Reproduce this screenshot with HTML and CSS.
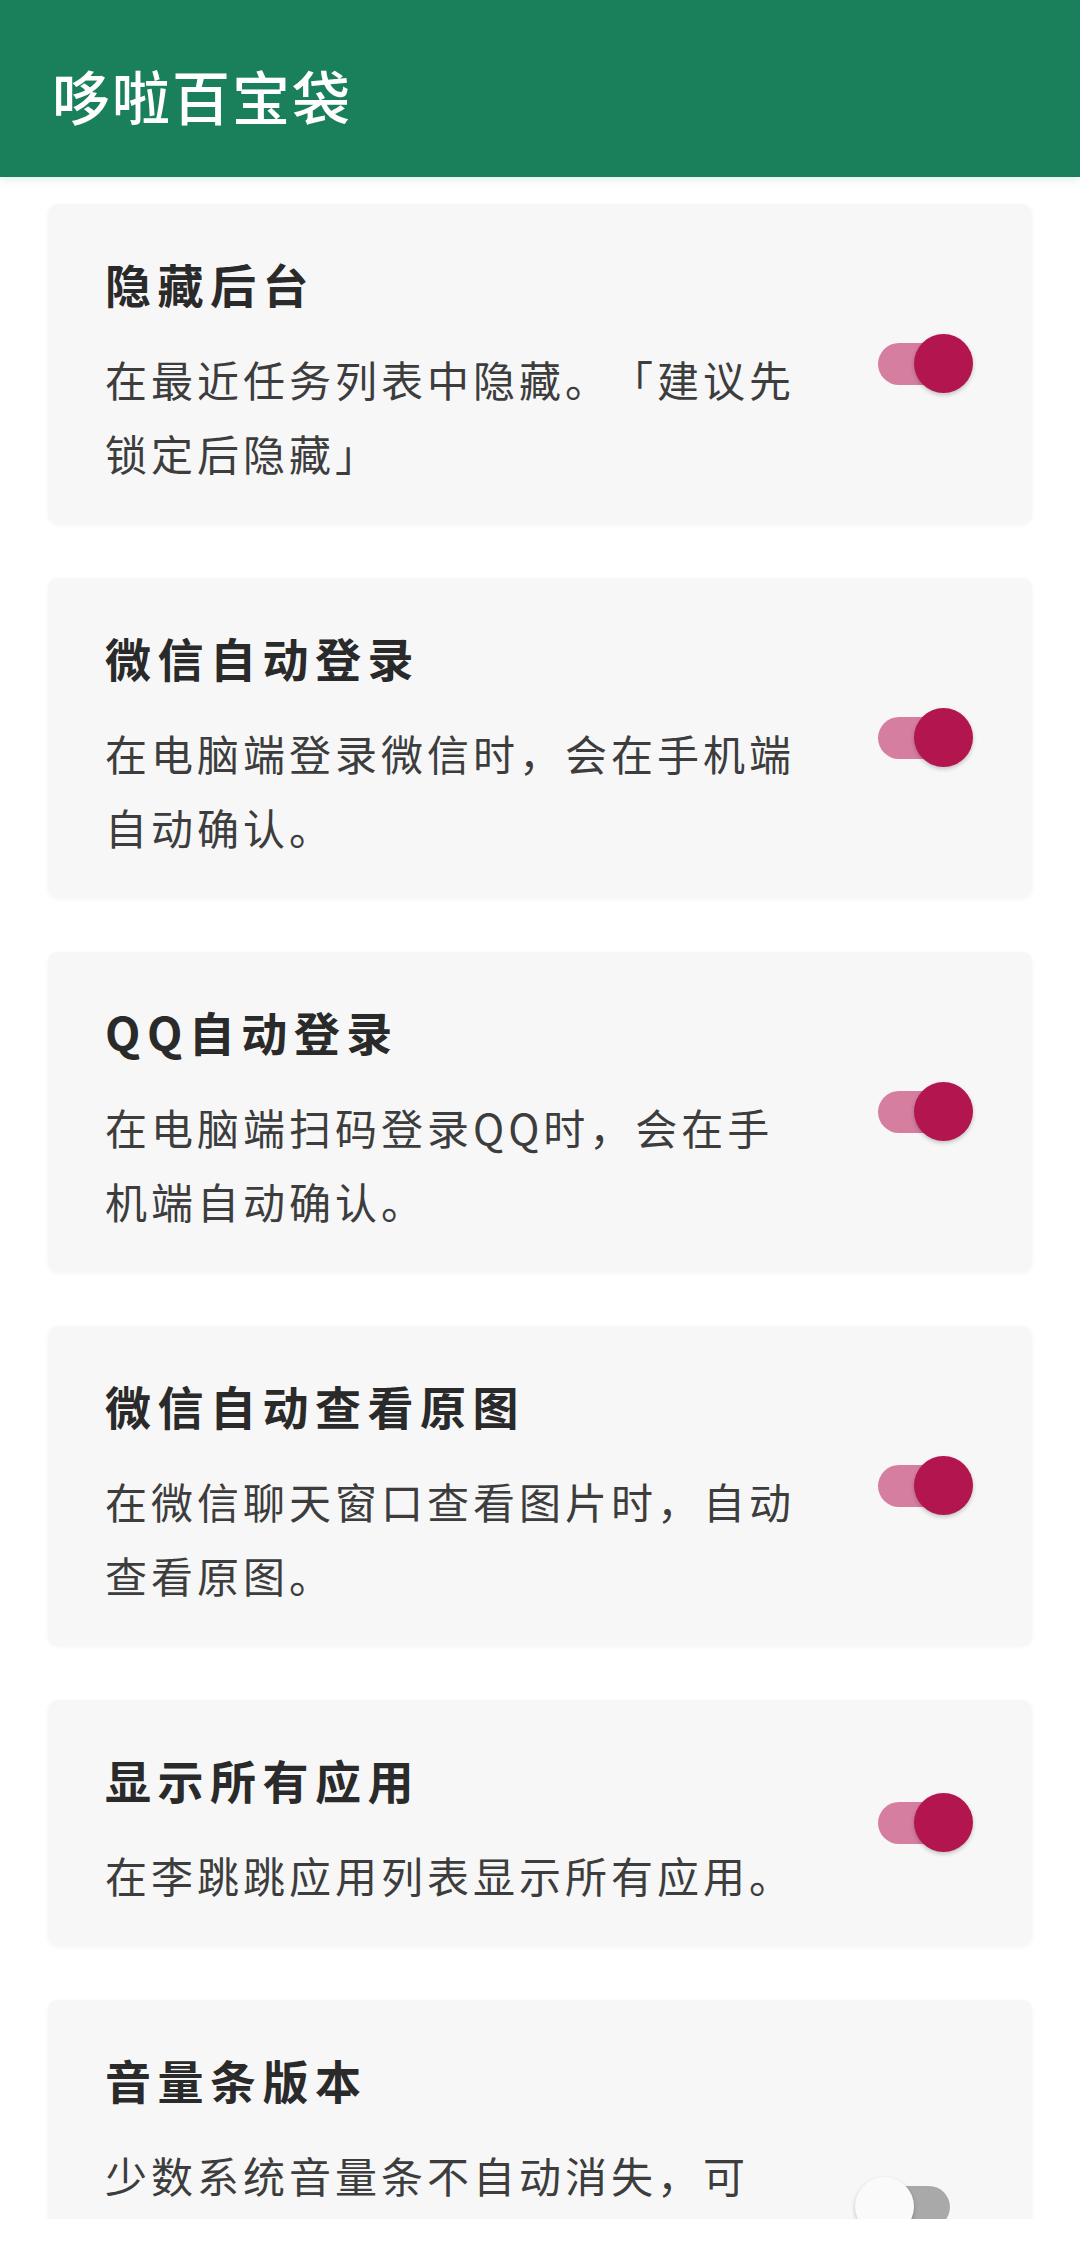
FILE: index.html
```html
<!DOCTYPE html>
<html lang="zh-CN">
<head>
<meta charset="utf-8">
<title>哆啦百宝袋</title>
<link rel="stylesheet" href="styles.css">
</head>
<body>
<header class="appbar">
  <h1 class="appbar-title">哆啦百宝袋</h1>
</header>
<main class="list">
  <section class="card">
    <div class="card-text">
      <div class="card-title">隐藏后台</div>
      <div class="card-desc"><span class="line">在最近任务列表中隐藏。「建议先</span><span class="line">锁定后隐藏」</span></div>
    </div>
    <div class="switch on"><span class="track"></span><span class="thumb"></span></div>
  </section>
  <section class="card">
    <div class="card-text">
      <div class="card-title">微信自动登录</div>
      <div class="card-desc"><span class="line">在电脑端登录微信时，会在手机端</span><span class="line">自动确认。</span></div>
    </div>
    <div class="switch on"><span class="track"></span><span class="thumb"></span></div>
  </section>
  <section class="card">
    <div class="card-text">
      <div class="card-title">QQ自动登录</div>
      <div class="card-desc"><span class="line">在电脑端扫码登录QQ时，会在手</span><span class="line">机端自动确认。</span></div>
    </div>
    <div class="switch on"><span class="track"></span><span class="thumb"></span></div>
  </section>
  <section class="card">
    <div class="card-text">
      <div class="card-title">微信自动查看原图</div>
      <div class="card-desc"><span class="line">在微信聊天窗口查看图片时，自动</span><span class="line">查看原图。</span></div>
    </div>
    <div class="switch on"><span class="track"></span><span class="thumb"></span></div>
  </section>
  <section class="card">
    <div class="card-text">
      <div class="card-title">显示所有应用</div>
      <div class="card-desc"><span class="line">在李跳跳应用列表显示所有应用。</span></div>
    </div>
    <div class="switch on"><span class="track"></span><span class="thumb"></span></div>
  </section>
  <section class="card card-tall">
    <div class="card-text">
      <div class="card-title">音量条版本</div>
      <div class="card-desc"><span class="line">少数系统音量条不自动消失，可</span></div>
    </div>
    <div class="switch off"><span class="track"></span><span class="thumb"></span></div>
  </section>
</main>
<div class="bottom-mask"></div>
</body>
</html>
```

FILE: styles.css
```css
html, body {
  margin: 0;
  padding: 0;
  background: #ffffff;
}
body {
  position: relative;
  font-family: "Noto Sans CJK SC", "Noto Sans", Roboto, sans-serif;
  width: 1080px;
  height: 2242px;
  overflow: hidden;
  text-spacing-trim: space-all;
}
.appbar {
  position: relative;
  z-index: 2;
  height: 177px;
  box-sizing: border-box;
  padding: 12px 0 0 52px;
  background: #1a7f5b;
  display: flex;
  align-items: center;
  box-shadow: 0 3px 8px rgba(26, 127, 91, 0.12);
}
.appbar-title {
  margin: 0;
  color: #ffffff;
  font-size: 58px;
  font-weight: 500;
  letter-spacing: 2px;
  line-height: 70px;
}
.list {
  display: flex;
  flex-direction: column;
  gap: 54px;
  padding: 27px 48px 0 48px;
}
.card {
  display: flex;
  align-items: center;
  background: #f7f7f7;
  border-radius: 10px;
  box-shadow: 0 1px 4px rgba(0, 0, 0, 0.05);
  padding: 49px 59px 34px 57px;
}
.card-tall {
  align-items: flex-start;
  padding-bottom: 120px;
}
.card-tall .switch {
  margin-top: 128px;
}
.card-text {
  flex: 1;
  display: flex;
  flex-direction: column;
  gap: 29px;
}
.card-title {
  font-size: 46px;
  font-weight: 700;
  letter-spacing: 6.5px;
  line-height: 60px;
  color: #2a2a2a;
}
.card-desc {
  font-size: 42px;
  font-weight: 400;
  letter-spacing: 4px;
  line-height: 74px;
  color: #3d3d3d;
}
.line {
  display: block;
  white-space: nowrap;
}
.switch {
  position: relative;
  width: 118px;
  height: 60px;
  flex: none;
  margin-top: -15px;
}
.track {
  position: absolute;
  left: 23px;
  top: 9px;
  width: 72px;
  height: 42px;
  border-radius: 21px;
}
.thumb {
  position: absolute;
  top: 0;
  width: 59px;
  height: 59px;
  border-radius: 50%;
  box-shadow: 0 2px 4px rgba(0, 0, 0, 0.22);
}
.switch.on .track {
  background: #d67ea0;
}
.switch.on .thumb {
  left: 59px;
  background: #b3154f;
}
.switch.off .track {
  background: #a9a9a9;
}
.switch.off .thumb {
  left: 0;
  background: #fafafa;
}
.bottom-mask {
  position: absolute;
  left: 0;
  right: 0;
  bottom: 0;
  height: 23px;
  background: #ffffff;
  z-index: 3;
}
```
